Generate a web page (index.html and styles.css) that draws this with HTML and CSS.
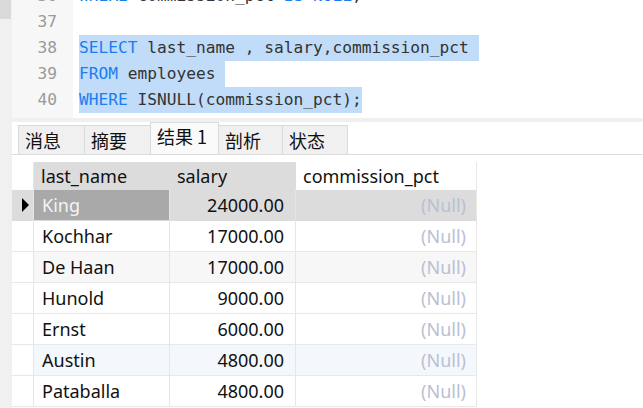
FILE: index.html
```html
<!DOCTYPE html>
<html lang="zh-CN">
<head>
<meta charset="utf-8">
<link rel="stylesheet" href="styles.css">
</head>
<body>
<div class="app">
  <div class="strip"><div class="thumb"></div></div>
  <div class="main">
    <div class="editor">
      <div class="gutter">
        <div class="ln">36</div>
        <div class="ln">37</div>
        <div class="ln">38</div>
        <div class="ln">39</div>
        <div class="ln">40</div>
      </div>
      <div class="code">
        <div class="line"><span class="kw">WHERE</span> commission_pct <span class="kw">IS NULL</span>;</div>
        <div class="line">&nbsp;</div>
        <div class="line"><span class="sel"><span class="kw">SELECT</span> last_name , salary,commission_pct </span></div>
        <div class="line"><span class="sel"><span class="kw">FROM</span> employees </span></div>
        <div class="line"><span class="sel"><span class="kw">WHERE</span> ISNULL(commission_pct);</span></div>
      </div>
    </div>
    <div class="results">
      <div class="tabbar">
        <div class="tab w66">消息</div>
        <div class="tab w66">摘要</div>
        <div class="tab active w68">结果 1</div>
        <div class="tab w64">剖析</div>
        <div class="tab w65">状态</div>
      </div>
      <div class="panel">
        <div class="grid">
          <div class="c ind hd-blank"></div>
          <div class="c hd gray">last_name</div>
          <div class="c hd gray">salary</div>
          <div class="c hd">commission_pct</div>

          <div class="c ind cur"><svg width="7" height="14" viewBox="0 0 7 14"><polygon points="0,0 7,7 0,14" fill="#000"/></svg></div>
          <div class="c cur name-sel">King</div>
          <div class="c cur num">24000.00</div>
          <div class="c cur null">(Null)</div>

          <div class="c ind"></div>
          <div class="c">Kochhar</div>
          <div class="c num">17000.00</div>
          <div class="c null">(Null)</div>

          <div class="c ind"></div>
          <div class="c alt">De Haan</div>
          <div class="c alt num">17000.00</div>
          <div class="c alt null">(Null)</div>

          <div class="c ind"></div>
          <div class="c">Hunold</div>
          <div class="c num">9000.00</div>
          <div class="c null">(Null)</div>

          <div class="c ind"></div>
          <div class="c">Ernst</div>
          <div class="c num">6000.00</div>
          <div class="c null">(Null)</div>

          <div class="c ind"></div>
          <div class="c hover">Austin</div>
          <div class="c hover num">4800.00</div>
          <div class="c hover null">(Null)</div>

          <div class="c ind"></div>
          <div class="c">Pataballa</div>
          <div class="c num">4800.00</div>
          <div class="c null">(Null)</div>
        </div>
      </div>
    </div>
  </div>
</div>
</body>
</html>
```

FILE: styles.css
```css
html, body {
  margin: 0;
  padding: 0;
}
body {
  width: 643px;
  height: 408px;
  overflow: hidden;
  background: #f0f0f0;
}
.app {
  display: flex;
  height: 408px;
}
.strip {
  width: 12px;
  flex: none;
  background: #f0f0f0;
}
.thumb {
  width: 11px;
  height: 19px;
  background: #dadada;
}
.main {
  flex: 1;
  display: flex;
  flex-direction: column;
  min-width: 0;
}
.editor {
  height: 118px;
  flex: none;
  display: flex;
  align-items: flex-start;
  background: #fff;
  overflow: hidden;
  font-family: "DejaVu Sans Mono", monospace;
  font-size: 16.2px;
  line-height: 26px;
}
.gutter {
  width: 61px;
  flex: none;
  background: #f7f7f7;
  margin-top: -17px;
  padding-bottom: 40px;
  box-sizing: border-box;
  padding-right: 16px;
  text-align: right;
  color: #9a9a9a;
}
.code {
  margin-top: -17px;
  padding-left: 6px;
  color: #333;
}
.line {
  height: 26px;
  white-space: pre;
}
.sel {
  background: #c0dcf8;
  display: inline-block;
  height: 26px;
}
.kw {
  color: #1a7df0;
}
.results {
  flex: 1;
  display: flex;
  flex-direction: column;
  margin-top: 4px;
  background: #fff;
}
.tabbar {
  height: 32px;
  flex: none;
  display: flex;
  align-items: flex-end;
  padding-left: 6px;
  border-bottom: 1px solid #dcdcdc;
  font-family: "Noto Sans CJK SC", "Noto Sans", sans-serif;
  font-size: 18px;
  color: #111;
}
.tab {
  height: 29px;
  box-sizing: border-box;
  background: #f0f0f0;
  border: 1px solid #dadada;
  border-bottom: none;
  margin-right: -1px;
  padding-left: 6px;
  line-height: 29px;
}
.tab.active {
  height: 32px;
  background: #fafafa;
  line-height: 27px;
  position: relative;
  z-index: 1;
}
.w66 { width: 67px; }
.w68 { width: 69px; }
.w64 { width: 65px; }
.w65 { width: 66px; }
.panel {
  flex: 1;
  padding-top: 7px;
  background: #fff;
}
.grid {
  display: grid;
  grid-template-columns: 22px 136px 126px 181px;
  grid-template-rows: 28px repeat(7, 31px);
  font-family: "Noto Sans", "Noto Sans CJK SC", sans-serif;
  font-size: 18px;
  color: #111;
}
.c {
  box-sizing: border-box;
  border-right: 1px solid #e6e6e6;
  border-bottom: 1px solid #e8e8e8;
  padding: 0 8px;
  line-height: 30px;
  white-space: nowrap;
}
.hd {
  line-height: 28px;
  border-bottom: none;
  padding-left: 7px;
}
.hd.gray {
  background: #dcdcdc;
  border-right-color: #dcdcdc;
}
.hd-blank {
  border-bottom: none;
}
.ind {
  padding: 0;
  display: flex;
  align-items: center;
  justify-content: flex-end;
  padding-right: 4px;
}
.cur {
  background: #dcdcdc;
  border-bottom-color: #dcdcdc;
}
.name-sel {
  background: #a9a9a9;
  color: #f4f4f4;
}
.num {
  text-align: right;
  padding-right: 11px;
}
.null {
  text-align: right;
  color: #b9c0d4;
  padding-right: 10px;
}
.alt {
  background: #f7f7f7;
}
.hover {
  background: #f4f8fc;
}
```
